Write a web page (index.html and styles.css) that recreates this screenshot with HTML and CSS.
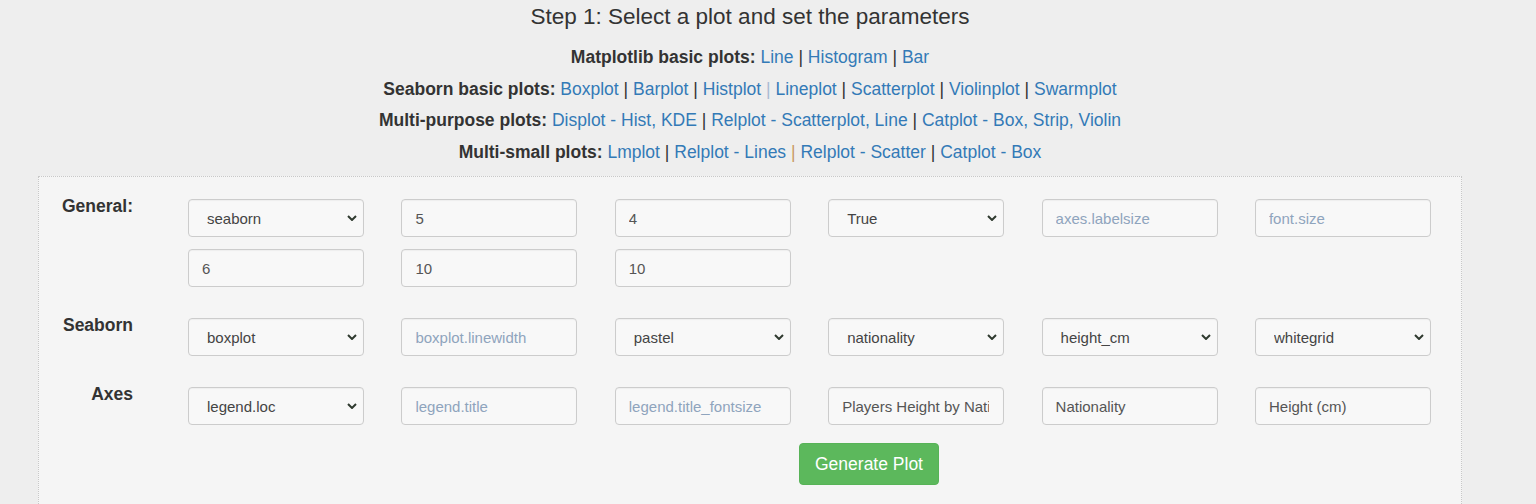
FILE: index.html
```html
<!DOCTYPE html>
<html>
<head>
<meta charset="utf-8">
<link rel="stylesheet" href="styles.css">
</head>
<body>
<div class="page">
  <h1 class="title">Step 1: Select a plot and set the parameters</h1>
  <div class="menu">
    <div class="menu-line"><b>Matplotlib basic plots:</b> <a>Line</a> <span class="sep">|</span> <a>Histogram</a> <span class="sep">|</span> <a>Bar</a></div>
    <div class="menu-line"><b>Seaborn basic plots:</b> <a>Boxplot</a> <span class="sep">|</span> <a>Barplot</a> <span class="sep">|</span> <a>Histplot</a> <span class="sep pale">|</span> <a>Lineplot</a> <span class="sep">|</span> <a>Scatterplot</a> <span class="sep">|</span> <a>Violinplot</a> <span class="sep">|</span> <a>Swarmplot</a></div>
    <div class="menu-line"><b>Multi-purpose plots:</b> <a>Displot - Hist</a><a>, KDE</a> <span class="sep">|</span> <a>Relplot - Scatterplot</a><a>, Line</a> <span class="sep">|</span> <a>Catplot - Box</a><a>, Strip</a><a>, Violin</a></div>
    <div class="menu-line"><b>Multi-small plots:</b> <a>Lmplot</a> <span class="sep">|</span> <a>Relplot - Lines</a> <span class="sep warm">|</span> <a>Relplot - Scatter</a> <span class="sep">|</span> <a>Catplot - Box</a></div>
  </div>

  <form class="panel">
    <div class="form-row">
      <label class="row-label">General:</label>
      <div class="fields">
        <div class="select-wrap"><select class="ctl"><option>seaborn</option></select><svg class="chev" viewBox="0 0 10 6"><path d="M1 1 L5 5 L9 1"/></svg></div>
        <input class="ctl" value="5">
        <input class="ctl" value="4">
        <div class="select-wrap"><select class="ctl"><option>True</option></select><svg class="chev" viewBox="0 0 10 6"><path d="M1 1 L5 5 L9 1"/></svg></div>
        <input class="ctl" placeholder="axes.labelsize">
        <input class="ctl" placeholder="font.size">
        <input class="ctl" value="6">
        <input class="ctl" value="10">
        <input class="ctl" value="10">
      </div>
    </div>

    <div class="form-row">
      <label class="row-label">Seaborn</label>
      <div class="fields">
        <div class="select-wrap"><select class="ctl"><option>boxplot</option></select><svg class="chev" viewBox="0 0 10 6"><path d="M1 1 L5 5 L9 1"/></svg></div>
        <input class="ctl" placeholder="boxplot.linewidth">
        <div class="select-wrap"><select class="ctl"><option>pastel</option></select><svg class="chev" viewBox="0 0 10 6"><path d="M1 1 L5 5 L9 1"/></svg></div>
        <div class="select-wrap"><select class="ctl"><option>nationality</option></select><svg class="chev" viewBox="0 0 10 6"><path d="M1 1 L5 5 L9 1"/></svg></div>
        <div class="select-wrap"><select class="ctl"><option>height_cm</option></select><svg class="chev" viewBox="0 0 10 6"><path d="M1 1 L5 5 L9 1"/></svg></div>
        <div class="select-wrap"><select class="ctl"><option>whitegrid</option></select><svg class="chev" viewBox="0 0 10 6"><path d="M1 1 L5 5 L9 1"/></svg></div>
      </div>
    </div>

    <div class="form-row">
      <label class="row-label">Axes</label>
      <div class="fields">
        <div class="select-wrap"><select class="ctl"><option>legend.loc</option></select><svg class="chev" viewBox="0 0 10 6"><path d="M1 1 L5 5 L9 1"/></svg></div>
        <input class="ctl" placeholder="legend.title">
        <input class="ctl" placeholder="legend.title_fontsize">
        <input class="ctl" value="Players Height by Nationality">
        <input class="ctl" value="Nationality">
        <input class="ctl" value="Height (cm)">
      </div>
    </div>

    <div class="actions">
      <button type="button" class="btn">Generate Plot</button>
    </div>
  </form>
</div>
</body>
</html>
```

FILE: styles.css
```css
html, body {
  margin: 0;
  padding: 0;
  background: #eeeeee;
}

body {
  font-family: "Liberation Sans", Arial, sans-serif;
  color: #333333;
  height: 504px;
  overflow: hidden;
}

.page {
  width: 1500px;
}

.title {
  margin: 0;
  font-size: 22.5px;
  font-weight: normal;
  line-height: 34px;
  text-align: center;
  color: #333333;
}

.menu {
  margin-top: 8px;
  text-align: center;
  font-size: 17.5px;
}

.menu-line {
  line-height: 31.6px;
  white-space: nowrap;
}

.menu-line b {
  color: #333333;
}

.menu-line a {
  color: #337ab7;
  text-decoration: none;
}

.sep {
  color: #333333;
}

.sep.pale {
  color: #a9bbd2;
}

.sep.warm {
  color: #c99a66;
}

.panel {
  margin: 8px 38px 0 38px;
  height: 328px;
  background: #f5f5f5;
  border: 1px dotted #c8c8c8;
  border-bottom: none;
  padding-top: 22px;
  box-sizing: border-box;
}

.form-row {
  display: flex;
  align-items: flex-start;
  margin-bottom: 31.5px;
}

.row-label {
  flex: 0 0 94px;
  margin-right: 55px;
  margin-top: -3px;
  text-align: right;
  font-weight: bold;
  font-size: 17.5px;
  line-height: 20px;
  color: #333333;
}

.fields {
  display: grid;
  grid-template-columns: repeat(6, 176px);
  column-gap: 37.4px;
  row-gap: 12.5px;
}

.ctl {
  display: block;
  width: 176px;
  height: 37.5px;
  box-sizing: border-box;
  margin: 0;
  padding: 0 14px 0 13px;
  font-family: "Liberation Sans", Arial, sans-serif;
  font-size: 15px;
  color: #555555;
  background: #f8f8f8;
  border: 1px solid #cccccc;
  border-radius: 4px;
  outline: none;
  box-shadow: inset 0 1px 1px rgba(0, 0, 0, 0.04);
}

.ctl::placeholder {
  color: #8fa4bd;
}

.select-wrap {
  position: relative;
  width: 176px;
}

select.ctl {
  appearance: none;
  -webkit-appearance: none;
  padding-left: 18px;
  color: #444444;
}

.chev {
  position: absolute;
  right: 7px;
  top: 16px;
  width: 10px;
  height: 6px;
  pointer-events: none;
}

.chev path {
  fill: none;
  stroke: #2f3a2f;
  stroke-width: 2;
}

.actions {
  margin-top: -13px;
  padding-left: 760px;
}

.btn {
  width: 140px;
  height: 42px;
  padding: 0;
  font-family: "Liberation Sans", Arial, sans-serif;
  font-size: 17.5px;
  color: #ffffff;
  background: #5cb85c;
  border: 1px solid #57b357;
  border-radius: 4px;
}
```
